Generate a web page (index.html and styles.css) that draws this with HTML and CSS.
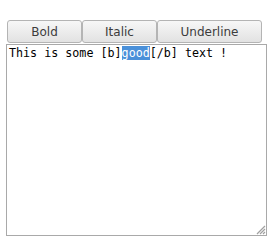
FILE: index.html
```html
<!DOCTYPE html>
<html lang="en">
<head>
  <meta charset="UTF-8" />
  <title>BBCode editor</title>
  <link rel="stylesheet" href="styles.css">
</head>
<body>

  <div class="editor">
    <div class="toolbar">
      <button type="button" class="btn btn-bold">Bold</button>
      <button type="button" class="btn btn-italic">Italic</button>
      <button type="button" class="btn btn-underline">Underline</button>
    </div>

    <div class="text-area">
      <div class="text-line">This is some [b]<span class="selected">good</span>[/b] text !</div>
      <svg class="grip" width="12" height="12" viewBox="0 0 12 12">
        <path d="M11 3 L3 11 M11 6 L6 11 M11 9 L9 11" stroke="#a0a0a0" stroke-width="1.2" fill="none"/>
      </svg>
    </div>
  </div>

</body>
</html>
```

FILE: styles.css
```css
* {
  margin: 0;
  padding: 0;
  box-sizing: border-box;
}

body {
  background: white;
  font-family: 'DejaVu Sans', sans-serif;
}

.editor {
  padding: 20px 0 0 6px;
  width: 267px;
}

.toolbar {
  display: flex;
  padding-left: 1px;
}

.btn {
  height: 23px;
  border: 1px solid #b4b4b4;
  border-radius: 3px;
  background: linear-gradient(#f7f7f7, #e2e2e2);
  color: #3c3c3c;
  font-family: 'DejaVu Sans', sans-serif;
  font-size: 12px;
}

.btn-bold,
.btn-italic {
  width: 75px;
}

.btn-underline {
  width: 105px;
}

.text-area {
  position: relative;
  width: 261px;
  height: 192px;
  margin-top: 1px;
  border: 1px solid #a9a9a9;
  padding: 1px 2px;
}

.text-line {
  font-family: 'DejaVu Sans Mono', monospace;
  font-size: 11.7px;
  line-height: 14px;
  color: #000;
  white-space: pre;
}

.selected {
  background: #4a90d9;
  color: white;
}

.grip {
  position: absolute;
  right: 0;
  bottom: 0;
}
```
